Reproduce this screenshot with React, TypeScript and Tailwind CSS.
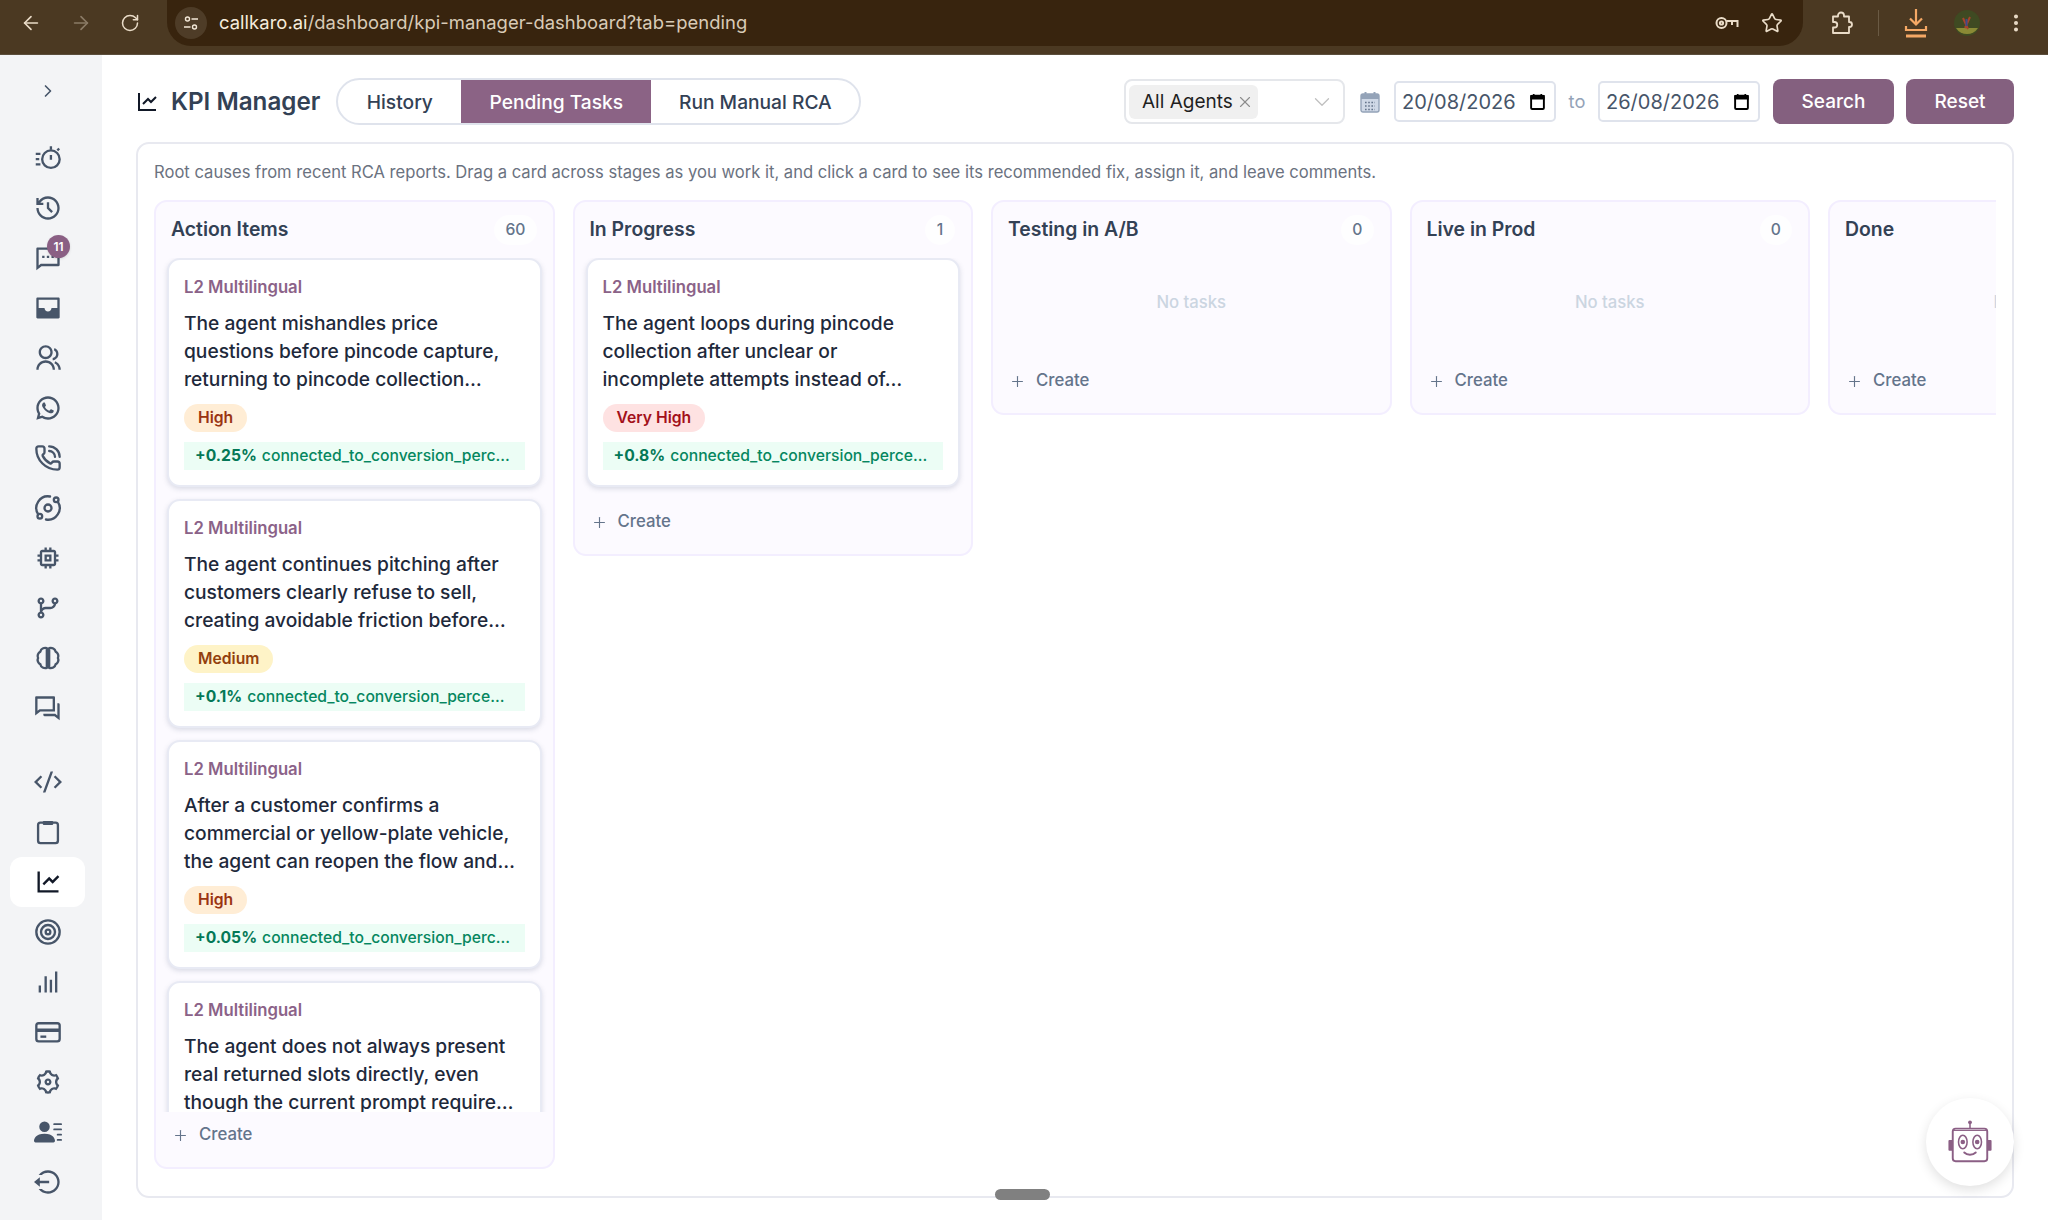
import { ArrowLeft, ArrowRight, ChevronDown, ChevronRight, Plus, RotateCw, Star, X, EllipsisVertical, Orbit, Target, PhoneCall } from 'lucide-react';
import {
    RiHistoryLine,
    RiMessage2Line,
    RiInboxFill,
    RiGroupLine,
    RiWhatsappLine,
    RiGitBranchLine,
    RiQuestionAnswerLine,
    RiCodeSSlashLine,
    RiLineChartLine,
    RiSettings3Line,
    RiLogoutCircleLine,
} from 'react-icons/ri';
import { MdOutlineMemory } from 'react-icons/md';
import { BsPersonLinesFill } from 'react-icons/bs';

type Task = {
    title: string;
    priority: 'High' | 'Medium' | 'Very High';
    delta: string;
};

function TimerLines({ className }: { className?: string }) {
    return (
        <svg viewBox="0 0 24 24" className={className} fill="none" stroke="currentColor" strokeWidth="2">
            <circle cx="14.5" cy="13" r="7.5" />
            <path d="M14.5 2v3M14.5 9.5v4M20 5.5l1.6-1.6M1.5 8.5h4M1.5 13h3M1.5 17.5h4" />
        </svg>
    );
}

function BrainSplit({ className }: { className?: string }) {
    return (
        <svg viewBox="0 0 24 24" className={className} fill="none" stroke="currentColor" strokeWidth="2" strokeLinejoin="round">
            <path d="M11 3.5C8.5 3 6 4 5.5 6.5 3.5 7.5 2.5 10 3.5 12 2.5 14 3.5 16.5 5.5 17.5 6 20 8.5 21 11 20.5z" />
            <path d="M13 3.5c2.5-.5 5 .5 5.5 3 2 1 3 3.5 2 5.5 1 2 0 4.5-2 5.5-.5 2.5-3 3.5-5.5 3z" />
        </svg>
    );
}

function ClipboardTab({ className }: { className?: string }) {
    return (
        <svg viewBox="0 0 24 24" className={className} fill="none" stroke="currentColor" strokeWidth="2">
            <rect x="3.5" y="4" width="17" height="17.5" rx="2" />
            <rect x="7.5" y="2.5" width="9" height="3.5" rx="1" fill="currentColor" stroke="none" />
        </svg>
    );
}

function Bars({ className }: { className?: string }) {
    return (
        <svg viewBox="0 0 24 24" className={className} fill="none" stroke="currentColor" strokeWidth="2">
            <path d="M5 21v-6M10 21V7M14.5 21V10M19 21V3" />
        </svg>
    );
}

function CardBand({ className }: { className?: string }) {
    return (
        <svg viewBox="0 0 24 24" className={className} fill="none" stroke="currentColor" strokeWidth="2">
            <rect x="2" y="4.5" width="20" height="15.5" rx="2" />
            <rect x="2" y="9" width="20" height="3" fill="currentColor" stroke="none" />
            <path d="M5.5 16h5" />
        </svg>
    );
}

const topIcons = [
    { icon: TimerLines },
    { icon: RiHistoryLine },
    { icon: RiMessage2Line, badge: 11 },
    { icon: RiInboxFill },
    { icon: RiGroupLine },
    { icon: RiWhatsappLine },
    { icon: PhoneCall },
    { icon: Orbit },
    { icon: MdOutlineMemory },
    { icon: RiGitBranchLine },
    { icon: BrainSplit },
    { icon: RiQuestionAnswerLine },
];

const bottomIcons = [
    { icon: RiCodeSSlashLine },
    { icon: ClipboardTab },
    { icon: RiLineChartLine, active: true },
    { icon: Target },
    { icon: Bars },
    { icon: CardBand },
    { icon: RiSettings3Line },
    { icon: BsPersonLinesFill },
    { icon: RiLogoutCircleLine },
];

const actionItems: Task[] = [
    { title: 'The agent mishandles price questions before pincode capture, returning to pincode collection…', priority: 'High', delta: '+0.25%' },
    { title: 'The agent continues pitching after customers clearly refuse to sell, creating avoidable friction before…', priority: 'Medium', delta: '+0.1%' },
    { title: 'After a customer confirms a commercial or yellow-plate vehicle, the agent can reopen the flow and…', priority: 'High', delta: '+0.05%' },
    { title: 'The agent does not always present real returned slots directly, even though the current prompt require…', priority: 'High', delta: '+0.3%' },
];

const inProgress: Task[] = [
    { title: 'The agent loops during pincode collection after unclear or incomplete attempts instead of…', priority: 'Very High', delta: '+0.8%' },
];

const priorityStyles = {
    High: 'bg-[#ffedd5] text-[#9a3412]',
    Medium: 'bg-[#fef3c7] text-[#92400e]',
    'Very High': 'bg-[#fee2e2] text-[#a3101a]',
};

function SidebarItem({ item }: { item: { icon: React.ElementType; badge?: number; active?: boolean } }) {
    const Icon = item.icon;
    return (
        <div className={`relative ml-[10px] flex h-[50px] w-[75px] items-center justify-center rounded-[12px] ${item.active ? 'bg-white' : ''}`}>
            <Icon className={`h-[28px] w-[28px] ${item.active ? 'text-[#111827]' : 'text-[#475569]'}`} />
            {item.badge && (
                <span className="absolute left-[37px] top-[2px] flex h-[23px] w-[23px] items-center justify-center rounded-full bg-[#8a5f84] text-[12px] font-semibold text-white shadow">
                    {item.badge}
                </span>
            )}
        </div>
    );
}

function TaskCard({ task }: { task: Task }) {
    return (
        <div className="shrink-0 rounded-[13px] border-2 border-[#e8eaf4] bg-white px-[15px] pb-[15px] pt-[17px] shadow-[0_2px_5px_rgba(100,116,139,0.22)]">
            <p className="text-[16.7px] font-semibold leading-[20px] text-[#8b6288]">L2 Multilingual</p>
            <p className="mt-[12px] text-[19.2px] font-medium leading-[28px] text-[#1e293b]">{task.title}</p>
            <span className={`mt-[11px] inline-block h-[28px] rounded-full px-[14px] text-[15.7px] font-semibold leading-[28px] ${priorityStyles[task.priority]}`}>
                {task.priority}
            </span>
            <div className="mt-[10px] flex h-[28px] items-center gap-[5px] bg-[#ecfdf5] pl-[11px] pr-[12px] text-[15.7px] leading-[28px]">
                <span className="font-bold text-[#047857]">{task.delta}</span>
                <span className="truncate font-medium text-[#06875f]">connected_to_conversion_percentage</span>
            </div>
        </div>
    );
}

function Column({ title, count, tasks }: { title: string; count: number; tasks: Task[] }) {
    return (
        <div className="flex max-h-full w-[400.5px] shrink-0 flex-col rounded-[13px] border-2 border-[#f3eeff] bg-[#fcfaff]">
            <div className="flex h-[56px] shrink-0 items-center justify-between pl-[15px] pr-[16px]">
                <h3 className="text-[19.4px] font-semibold text-[#334155]">{title}</h3>
                <span className="flex h-[30px] min-w-[30px] items-center justify-center rounded-full bg-white/70 px-[11px] text-[15.7px] font-medium text-[#64748b]">{count}</span>
            </div>
            <div className="flex min-h-0 flex-col gap-[12px] overflow-hidden px-[11px] pb-[12px]">
                {tasks.map((task, i) => (
                    <TaskCard key={i} task={task} />
                ))}
                {tasks.length === 0 && (
                    <div className="flex h-[88px] items-center justify-center pt-[1px] text-[16.7px] font-medium text-[#cbd5e1]">No tasks</div>
                )}
            </div>
            <div className="mb-[9px] flex h-[46px] shrink-0 items-center gap-[10px] pl-[16px] text-[16.8px] font-medium text-[#64748b]">
                <Plus className="h-[17px] w-[17px]" strokeWidth={1.6} />
                Create
            </div>
        </div>
    );
}

function DateField({ value }: { value: string }) {
    return (
        <div className="flex h-[41px] w-[162px] items-center justify-between rounded-[5px] border-2 border-[#dfe3ec] bg-white pl-[6px] pr-[9px] text-[20px] text-[#475569]">
            {value}
            <svg viewBox="0 0 14 16" className="h-[17px] w-[15px]">
                <path d="M1 3.5a1 1 0 0 1 1-1h10a1 1 0 0 1 1 1V14a1 1 0 0 1-1 1H2a1 1 0 0 1-1-1z" fill="none" stroke="#000" strokeWidth="1.8" />
                <path d="M1 2.5h12v3H1zM3.5 1v2M10.5 1v2" fill="#000" stroke="#000" strokeWidth="1.4" />
            </svg>
        </div>
    );
}

function Robot() {
    return (
        <svg viewBox="0 0 48 48" className="h-[46px] w-[46px]" fill="none" stroke="#8b5f85">
            <path d="M24 2.5v7" strokeWidth="1.6" />
            <circle cx="24" cy="3.5" r="2" fill="#8b5f85" stroke="none" />
            <rect x="6" y="10" width="36" height="34" rx="3" strokeWidth="2" />
            <path d="M7 12h34" strokeWidth="1" />
            <rect x="1.5" y="22" width="4.5" height="11" rx="1" fill="#8b5f85" stroke="none" />
            <rect x="42" y="22" width="4.5" height="11" rx="1" fill="#8b5f85" stroke="none" />
            <ellipse cx="16.5" cy="24" rx="4.5" ry="7" strokeWidth="1.6" />
            <ellipse cx="31.5" cy="24" rx="4.5" ry="7" strokeWidth="1.6" />
            <circle cx="16.5" cy="24" r="2.4" fill="#8b5f85" stroke="none" />
            <circle cx="31.5" cy="24" r="2.4" fill="#8b5f85" stroke="none" />
            <path d="M18 35c3 3 9 3 12 0" strokeWidth="2" strokeLinecap="round" />
        </svg>
    );
}

export default function App() {
    return (
        <div className="relative flex h-screen w-full flex-col overflow-hidden bg-white font-['Inter',sans-serif]">
            {/* browser toolbar */}
            <div className="flex h-[55px] shrink-0 items-start border-b border-[#5b4e3c] bg-[#4b3922] text-[#eadcc8]">
                <div className="flex h-[46px] w-[167px] shrink-0 items-center pl-[20px]">
                    <ArrowLeft className="h-[22px] w-[22px]" strokeWidth={1.8} />
                    <ArrowRight className="ml-[28px] h-[22px] w-[22px] text-[#8b7b66]" strokeWidth={1.8} />
                    <RotateCw className="ml-[28px] h-[20px] w-[20px]" strokeWidth={1.8} />
                </div>
                <div className="flex h-[46px] w-[1636px] shrink-0 items-center rounded-b-[24px] bg-[#38240e] pl-[8px] pr-[20px]">
                    <span className="flex h-[32px] w-[32px] items-center justify-center rounded-full bg-[#4e3c27]">
                        <svg viewBox="0 0 16 16" className="h-[16px] w-[16px]" fill="none" stroke="#f3e8d8" strokeWidth="1.4">
                            <circle cx="4.5" cy="4" r="2" />
                            <path d="M8.5 4H15M1 12h6.5" />
                            <circle cx="11.5" cy="12" r="2" />
                        </svg>
                    </span>
                    <span className="ml-[12px] text-[18.4px] tracking-[0.05px] text-[#d9cbb7]">
                        <span className="text-[#f6ecdd]">callkaro.ai</span>/dashboard/kpi-manager-dashboard?tab=pending
                    </span>
                    <svg viewBox="0 0 24 14" className="ml-auto h-[14px] w-[24px]" fill="none" stroke="#eadcc8" strokeWidth="2">
                        <circle cx="6.5" cy="7" r="5" />
                        <circle cx="6.5" cy="7" r="1.6" />
                        <path d="M11.5 5h11v6M17 5v4" />
                    </svg>
                    <Star className="ml-[22px] h-[22px] w-[22px]" strokeWidth={1.8} />
                </div>
                <div className="flex h-[46px] flex-1 items-center">
                    <svg viewBox="0 0 24 24" className="ml-[26px] h-[24px] w-[24px]" fill="none" stroke="#eadcc8" strokeWidth="1.8" strokeLinejoin="round">
                        <path d="M4 5.5h5v-1a3 3 0 0 1 6 0v1h5v5.5h.5a2.5 2.5 0 0 1 0 5H20v6H4v-5.5h1.5a2.7 2.7 0 0 0 0-5.5H4z" />
                    </svg>
                    <span className="ml-[25px] h-[26px] w-px bg-[#6a5a44]" />
                    <svg viewBox="0 0 24 32" className="ml-[25px] h-[32px] w-[24px]" fill="none" stroke="#f5a865" strokeWidth="2.2">
                        <path d="M12 2v15M6 11.5l6 6 6-6M2 19v4h20v-4" />
                        <path d="M2 29h20" strokeWidth="3" />
                    </svg>
                    <svg viewBox="0 0 26 26" className="ml-[26px] h-[26px] w-[26px]">
                        <circle cx="13" cy="13" r="13" fill="#3f4a22" />
                        <path d="M2 18h22a13 13 0 0 1-22 0z" fill="#8a8a35" />
                        <path d="M9 8l5 11M16 7l-5 11" stroke="#a5442c" strokeWidth="2" />
                        <path d="M12.5 9v7" stroke="#3b4a8a" strokeWidth="2" />
                    </svg>
                    <EllipsisVertical className="ml-[25px] h-[22px] w-[22px]" strokeWidth={2.4} />
                </div>
            </div>

            <div className="flex min-h-0 flex-1">
                {/* sidebar */}
                <aside className="flex w-[102px] shrink-0 flex-col bg-[#f3f4f6] pt-[18px]">
                    <div className="mb-[24px] flex h-[36px] w-[95px] items-center justify-center">
                        <ChevronRight className="h-[20px] w-[20px] text-[#475569]" strokeWidth={2} />
                    </div>
                    {topIcons.map((item, i) => (
                        <SidebarItem key={i} item={item} />
                    ))}
                    <div className="h-[24px] shrink-0" />
                    {bottomIcons.map((item, i) => (
                        <SidebarItem key={i} item={item} />
                    ))}
                </aside>

                <main className="flex min-w-0 flex-1 flex-col px-[34px] pb-[22px] pt-[23px]">
                    <div className="flex h-[47px] shrink-0 items-center">
                        <RiLineChartLine className="ml-[-1px] h-[24px] w-[24px] text-[#111827]" />
                        <h1 className="ml-[12px] pt-[1px] text-[24.2px] font-semibold text-[#334155]">KPI Manager</h1>
                        <div className="ml-[16px] flex h-[47px] overflow-hidden rounded-full border-2 border-[#dfe3ec] text-[19.2px] font-medium text-[#334155]">
                            <button className="w-[123px] pt-[1px]">History</button>
                            <button className="w-[190px] bg-[#8b6385] pt-[1px] text-white">Pending Tasks</button>
                            <button className="w-[208px] pt-[1px]">Run Manual RCA</button>
                        </div>
                        <div className="ml-auto flex items-center">
                            <div className="flex h-[45px] w-[221px] items-center rounded-[8px] border-2 border-[#e5e7eb] pl-[3px] pr-[7px]">
                                <span className="flex h-[34px] w-[129px] items-center gap-[3px] rounded-[6px] bg-[#f0f0f0] pl-[13px] pt-[1px] text-[19px] text-[#1f1f1f]">
                                    All Agents
                                    <X className="h-[18px] w-[18px] text-[#8c8c8c]" strokeWidth={1.5} />
                                </span>
                                <ChevronDown className="ml-auto h-[26px] w-[28px] text-[#bfbfbf]" strokeWidth={1.2} />
                            </div>
                            <svg viewBox="0 0 20 22" className="ml-[15px] mr-[14px] h-[22px] w-[20px]">
                                <rect x="1" y="3" width="18" height="18" rx="2" fill="#cfd8e6" stroke="#94a3b8" strokeWidth="1.4" />
                                <rect x="1" y="3" width="18" height="5" fill="#94a3b8" />
                                <path d="M5.5 1v4M14.5 1v4" stroke="#94a3b8" strokeWidth="2" />
                                <path d="M5 11.5h10M5 15h10M5 18.5h10" stroke="#64748b" strokeWidth="1.4" strokeDasharray="1.6 1.6" />
                            </svg>
                            <DateField value="20/08/2026" />
                            <span className="w-[42px] text-center text-[18.3px] text-[#94a3b8]">to</span>
                            <DateField value="26/08/2026" />
                            <button className="ml-[13px] h-[45px] w-[121px] rounded-[8px] bg-[#84607f] pt-[1px] text-[19px] font-medium text-white">Search</button>
                            <button className="ml-[12px] h-[45px] w-[108px] rounded-[8px] bg-[#84607f] pt-[1px] text-[19px] font-medium text-white">Reset</button>
                        </div>
                    </div>

                    <section className="mt-[17px] flex min-h-0 flex-1 flex-col rounded-[13px] border-2 border-[#e8e9f0] bg-white pb-[27px] pl-[16px] pr-[16px] pt-[17px]">
                        <p className="h-[23px] shrink-0 text-[16.6px] leading-[23px] text-[#6b7280]">
                            Root causes from recent RCA reports. Drag a card across stages as you work it, and click a card to see its recommended fix, assign it, and leave comments.
                        </p>
                        <div className="mt-[16px] flex min-h-0 flex-1 items-start gap-[18px] overflow-hidden">
                            <Column title="Action Items" count={60} tasks={actionItems} />
                            <Column title="In Progress" count={1} tasks={inProgress} />
                            <Column title="Testing in A/B" count={0} tasks={[]} />
                            <Column title="Live in Prod" count={0} tasks={[]} />
                            <Column title="Done" count={0} tasks={[]} />
                        </div>
                    </section>
                </main>
            </div>

            {/* page scrollbar thumb and floating assistant button */}
            <div className="absolute bottom-[20px] left-[995px] h-[11px] w-[55px] rounded-full bg-[#808080]" />
            <div className="absolute bottom-[34px] right-[34px] flex h-[88px] w-[88px] items-center justify-center rounded-full bg-white shadow-[0_4px_12px_rgba(0,0,0,0.12)]">
                <Robot />
            </div>
        </div>
    );
}
